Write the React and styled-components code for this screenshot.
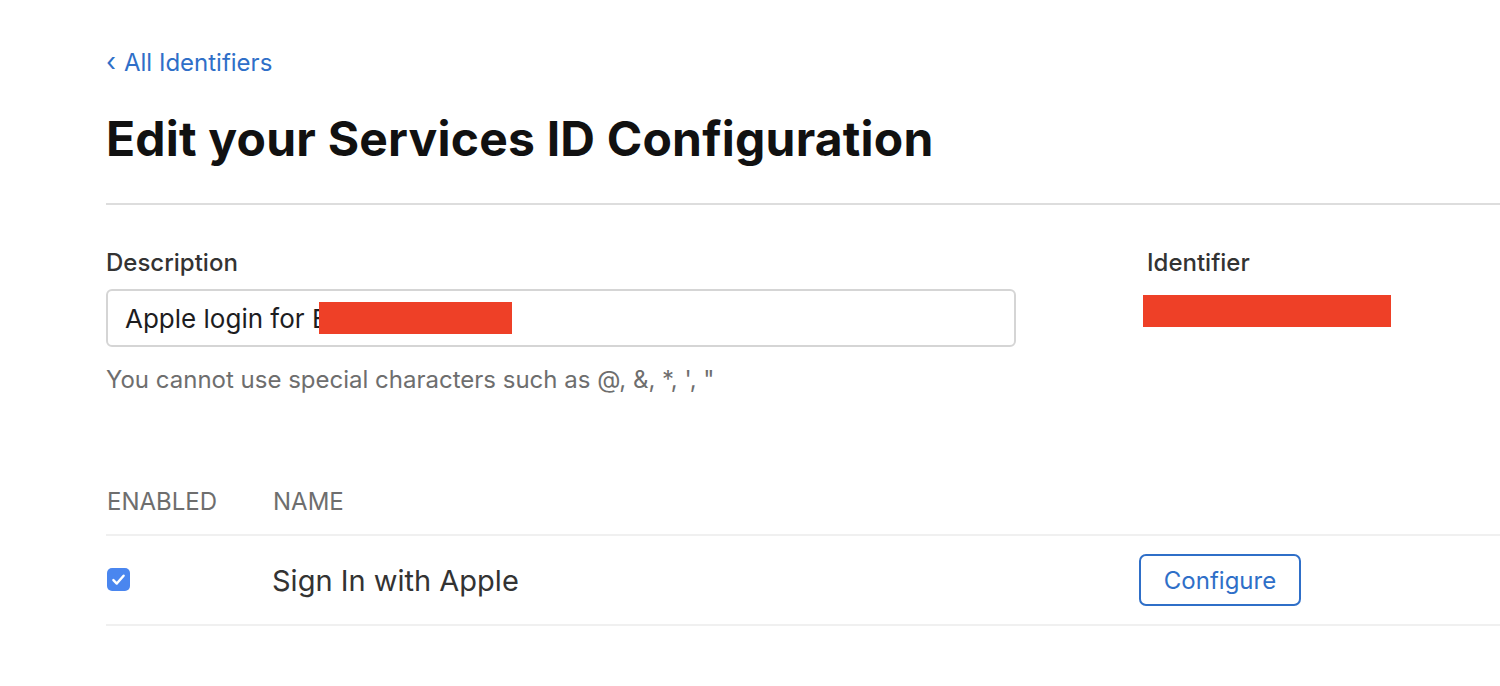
import styled, { createGlobalStyle } from 'styled-components';

const GlobalStyle = createGlobalStyle`
  html, body {
    margin: 0;
    padding: 0;
    background: #ffffff;
    overflow: hidden;
  }
  body {
    font-family: Inter, "Noto Sans", "Liberation Sans", sans-serif;
    color: #333333;
  }
`;

const Page = styled.div`
  width: 1600px;
  padding: 44px 0 0 106px;
  box-sizing: border-box;
`;

const BackLink = styled.a`
  display: inline-flex;
  align-items: center;
  gap: 8px;
  color: #2f6fc8;
  font-size: 24px;
  line-height: 38px;
  text-decoration: none;
  cursor: pointer;
`;

const Chevron = styled.span`
  font-size: 26px;
  line-height: 1;
  margin-top: -3px;
`;

const Title = styled.h1`
  margin: 29px 0 0;
  font-size: 48px;
  line-height: 56px;
  font-weight: 700;
  color: #111111;
  letter-spacing: 0.2px;
`;

const Divider = styled.hr`
  margin: 36px 0 0;
  border: none;
  height: 2px;
  background: #dddddd;
`;

const FieldGrid = styled.div`
  display: grid;
  grid-template-columns: 910px 1fr;
  column-gap: 127px;
  margin-top: 42px;
`;

const Field = styled.div`
  display: flex;
  flex-direction: column;
`;

const Label = styled.label`
  font-size: 24px;
  line-height: 32px;
  font-weight: 500;
  color: #333333;
  padding-left: ${(p) => p.$indent || 0}px;
`;

const InputBox = styled.div`
  margin-top: 10px;
  height: 58px;
  box-sizing: border-box;
  border: 2px solid #d5d5d5;
  border-radius: 6px;
  display: flex;
  align-items: center;
  padding: 0 17px;
  font-size: 26px;
  color: #1d1d1f;
`;

const Redacted = styled.span`
  display: inline-block;
  width: ${(p) => p.$w}px;
  height: 32px;
  background: #ee4027;
  margin-left: ${(p) => p.$offset || 0}px;
`;

const IdentifierValue = styled.div`
  margin-top: 16px;
`;

const Hint = styled.p`
  margin: 18px 0 0;
  font-size: 24px;
  line-height: 30px;
  color: #6e6e6e;
`;

const Table = styled.div`
  margin-top: 73px;
`;

const Row = styled.div`
  display: grid;
  grid-template-columns: 166px 867px 1fr;
  align-items: center;
  height: ${(p) => p.$h}px;
  border-bottom: 2px solid #f0f0f0;
`;

const HeadCell = styled.div`
  font-size: 24px;
  color: #6e6e6e;
  text-transform: uppercase;
  padding-left: 1px;
`;

const NameCell = styled.div`
  font-size: 29px;
  color: #333333;
`;

const Checkbox = styled.span`
  width: 23px;
  height: 23px;
  border-radius: 5px;
  background: #4a86ef;
  display: inline-flex;
  align-items: center;
  justify-content: center;
  margin-left: 1px;
`;

const ConfigureButton = styled.button`
  width: 162px;
  height: 52px;
  border: 2px solid #2f6fc8;
  border-radius: 7px;
  background: #ffffff;
  color: #2f6fc8;
  font-family: inherit;
  font-size: 24px;
  cursor: pointer;
`;

export default function App() {
  return (
    <>
      <GlobalStyle />
      <Page>
        <BackLink>
          <Chevron>‹</Chevron>All Identifiers
        </BackLink>
        <Title>Edit your Services ID Configuration</Title>
        <Divider />
        <FieldGrid>
          <Field>
            <Label>Description</Label>
            <InputBox>
              Apple login for E
              <Redacted $w={193} $offset={-9} />
            </InputBox>
            <Hint>You cannot use special characters such as @, &amp;, *, ', "</Hint>
          </Field>
          <Field>
            <Label $indent={4}>Identifier</Label>
            <IdentifierValue>
              <Redacted $w={248} />
            </IdentifierValue>
          </Field>
        </FieldGrid>
        <Table>
          <Row $h={66}>
            <HeadCell>Enabled</HeadCell>
            <HeadCell>Name</HeadCell>
            <div />
          </Row>
          <Row $h={88}>
            <div>
              <Checkbox>
                <svg width="17" height="17" viewBox="0 0 16 16">
                  <path d="M3.2 8.6 L6.4 11.8 L12.8 4.4" fill="none" stroke="#fff" strokeWidth="2.3" strokeLinecap="round" strokeLinejoin="round" />
                </svg>
              </Checkbox>
            </div>
            <NameCell>Sign In with Apple</NameCell>
            <div>
              <ConfigureButton>Configure</ConfigureButton>
            </div>
          </Row>
        </Table>
      </Page>
    </>
  );
}
